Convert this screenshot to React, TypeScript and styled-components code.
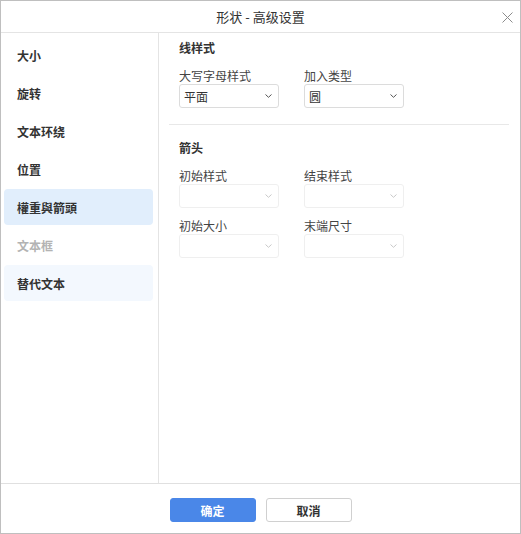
import * as React from 'react';
import styled, { createGlobalStyle } from 'styled-components';

const GlobalStyle = createGlobalStyle`
  html, body {
    margin: 0;
    padding: 0;
    background: #fff;
  }
  * {
    box-sizing: border-box;
  }
`;

const Window = styled.div`
  width: 521px;
  height: 534px;
  border: 1px solid #bfbfbf;
  display: flex;
  flex-direction: column;
  background: #fff;
  font-family: 'Noto Sans CJK SC', 'Noto Sans', sans-serif;
  color: #333;
`;

const TitleBar = styled.div`
  position: relative;
  height: 32px;
  flex: none;
  border-bottom: 1px solid #e4e4e4;
  display: flex;
  align-items: center;
  justify-content: center;
  font-size: 13px;
  color: #333;
`;

const CloseButton = styled.button`
  position: absolute;
  right: 7px;
  top: 10px;
  width: 12px;
  height: 12px;
  padding: 0;
  border: 0;
  background: none;
  display: flex;
  align-items: center;
  justify-content: center;
  cursor: pointer;
`;

const Body = styled.div`
  flex: 1;
  display: flex;
  min-height: 0;
`;

const Sidebar = styled.div`
  width: 158px;
  flex: none;
  border-right: 1px solid #e4e4e4;
  padding: 4px 5px 0 3px;
  display: flex;
  flex-direction: column;
  gap: 2px;
`;

const NavItem = styled.div<{ $state?: 'active' | 'hover' | 'disabled' }>`
  height: 36px;
  border-radius: 4px;
  padding-left: 13px;
  display: flex;
  align-items: center;
  font-size: 12px;
  font-weight: 700;
  color: ${p => (p.$state === 'disabled' ? '#b3b3b3' : '#333')};
  background: ${p =>
    p.$state === 'active' ? '#e1eefc' : p.$state === 'hover' ? '#f3f8fe' : 'transparent'};
`;

const Panel = styled.div`
  flex: 1;
  padding: 7px 11px 0 20px;
`;

const Heading = styled.div`
  font-size: 12px;
  font-weight: 700;
  line-height: 16px;
  margin-bottom: 12px;
`;

const FieldGrid = styled.div`
  display: grid;
  grid-template-columns: 100px 100px;
  column-gap: 25px;
  row-gap: 10px;
`;

const Field = styled.div`
  display: flex;
  flex-direction: column;
`;

const Label = styled.div`
  font-size: 12px;
  line-height: 16px;
  color: #444;
`;

const Select = styled.div<{ $disabled?: boolean }>`
  height: 24px;
  border: 1px solid ${p => (p.$disabled ? '#efefef' : '#dcdcdc')};
  border-radius: 3px;
  padding: 0 6px 0 4px;
  display: flex;
  align-items: center;
  justify-content: space-between;
  font-size: 12px;
  color: #333;
  background: #fff;
`;

const Divider = styled.div`
  height: 1px;
  background: #e8e8e8;
  margin: 16px 0 15px -10px;
`;

const Footer = styled.div`
  height: 50px;
  flex: none;
  border-top: 1px solid #e0e0e0;
  display: flex;
  justify-content: center;
  align-items: flex-start;
  padding-top: 14px;
  gap: 10px;
`;

const Button = styled.button<{ $primary?: boolean }>`
  width: 86px;
  height: 24px;
  border-radius: 3px;
  border: 1px solid ${p => (p.$primary ? '#4a87e8' : '#d0d0d0')};
  background: ${p => (p.$primary ? '#4a87e8' : '#fff')};
  color: ${p => (p.$primary ? '#fff' : '#333')};
  font-family: inherit;
  font-size: 12px;
  font-weight: 700;
  padding: 0;
  cursor: pointer;
`;

const Chevron = ({ disabled }: { disabled?: boolean }) => (
  <svg width="7" height="4" viewBox="0 0 7 4">
    <path
      d="M0.5 0.5 L3.5 3.3 L6.5 0.5"
      fill="none"
      stroke={disabled ? '#c8c8c8' : '#555'}
      strokeWidth="1"
    />
  </svg>
);

const Dropdown = ({ value, disabled }: { value?: string; disabled?: boolean }) => (
  <Select $disabled={disabled}>
    <span>{value}</span>
    <Chevron disabled={disabled} />
  </Select>
);

const navItems: { label: string; state?: 'active' | 'hover' | 'disabled' }[] = [
  { label: '大小' },
  { label: '旋转' },
  { label: '文本环绕' },
  { label: '位置' },
  { label: '權重與箭頭', state: 'active' },
  { label: '文本框', state: 'disabled' },
  { label: '替代文本', state: 'hover' },
];

export default function App() {
  return (
    <>
      <GlobalStyle />
      <Window>
        <TitleBar>
          形状 - 高级设置
          <CloseButton aria-label="close">
            <svg width="11" height="11" viewBox="0 0 11 11">
              <path d="M0.5 0.5 L10.5 10.5 M10.5 0.5 L0.5 10.5" stroke="#8c8c8c" strokeWidth="1" />
            </svg>
          </CloseButton>
        </TitleBar>
        <Body>
          <Sidebar>
            {navItems.map(item => (
              <NavItem key={item.label} $state={item.state}>
                {item.label}
              </NavItem>
            ))}
          </Sidebar>
          <Panel>
            <Heading>线样式</Heading>
            <FieldGrid>
              <Field>
                <Label>大写字母样式</Label>
                <Dropdown value="平面" />
              </Field>
              <Field>
                <Label>加入类型</Label>
                <Dropdown value="圆" />
              </Field>
            </FieldGrid>
            <Divider />
            <Heading>箭头</Heading>
            <FieldGrid>
              <Field>
                <Label>初始样式</Label>
                <Dropdown disabled />
              </Field>
              <Field>
                <Label>结束样式</Label>
                <Dropdown disabled />
              </Field>
              <Field>
                <Label>初始大小</Label>
                <Dropdown disabled />
              </Field>
              <Field>
                <Label>末端尺寸</Label>
                <Dropdown disabled />
              </Field>
            </FieldGrid>
          </Panel>
        </Body>
        <Footer>
          <Button $primary>确定</Button>
          <Button>取消</Button>
        </Footer>
      </Window>
    </>
  );
}
